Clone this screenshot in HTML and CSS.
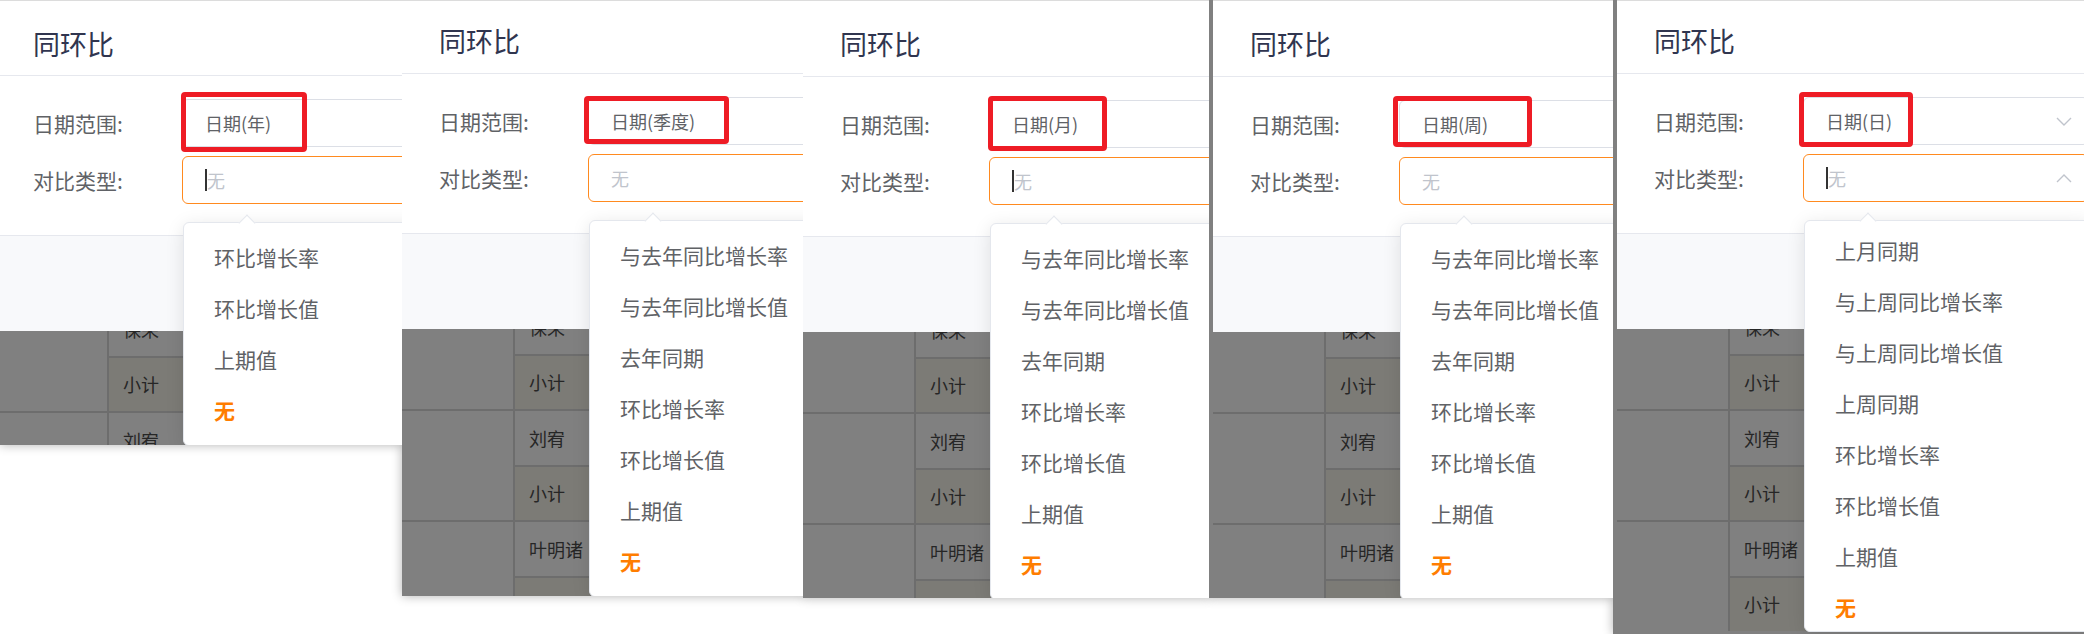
FILE: index.html
```html
<!DOCTYPE html>
<html lang="zh-CN">
<head>
    <meta charset="UTF-8">
    <title>同环比</title>
    <link rel="stylesheet" href="styles.css">
</head>
<body>
    <div class="shots">
        <!-- 年 -->
        <section class="shot shot-1">
            <div class="stage">
                <div class="dialog">
                    <div class="dialog-header"><span class="dialog-title">同环比</span></div>
                    <div class="dialog-body">
                        <div class="form-row">
                            <label class="form-label">日期范围:</label>
                            <div class="select">
                                <span>日期(年)</span>
                                <svg class="select-arrow" viewBox="0 0 16 9"><path d="M1 1 L8 8 L15 1"/></svg>
                                <span class="mark"></span>
                            </div>
                        </div>
                        <div class="form-row">
                            <label class="form-label">对比类型:</label>
                            <div class="select is-focus">
                                <span class="caret"></span><span class="placeholder">无</span>
                                <svg class="select-arrow" viewBox="0 0 16 9"><path d="M1 8 L8 1 L15 8"/></svg>
                                <div class="dropdown">
                                    <div class="dropdown-wrap">
                                        <ul class="dropdown-list">
                                            <li class="dropdown-item">环比增长率</li>
                                            <li class="dropdown-item">环比增长值</li>
                                            <li class="dropdown-item">上期值</li>
                                            <li class="dropdown-item selected">无</li>
                                        </ul>
                                    </div>
                                </div>
                            </div>
                        </div>
                    </div>
                    <div class="dialog-footer"></div>
                </div>
                <div class="backdrop">
                    <div class="cell cell-group"></div><div class="cell">保荣</div><div class="cell cell-sub">小计</div>
                    <div class="cell cell-group"></div><div class="cell">刘宥</div><div class="cell cell-sub">小计</div>
                </div>
            </div>
        </section>

        <!-- 季度 -->
        <section class="shot shot-2">
            <div class="stage">
                <div class="dialog">
                    <div class="dialog-header"><span class="dialog-title">同环比</span></div>
                    <div class="dialog-body">
                        <div class="form-row">
                            <label class="form-label">日期范围:</label>
                            <div class="select">
                                <span>日期(季度)</span>
                                <svg class="select-arrow" viewBox="0 0 16 9"><path d="M1 1 L8 8 L15 1"/></svg>
                                <span class="mark"></span>
                            </div>
                        </div>
                        <div class="form-row">
                            <label class="form-label">对比类型:</label>
                            <div class="select is-focus">
                                <span class="placeholder">无</span>
                                <svg class="select-arrow" viewBox="0 0 16 9"><path d="M1 8 L8 1 L15 8"/></svg>
                                <div class="dropdown">
                                    <div class="dropdown-wrap">
                                        <ul class="dropdown-list">
                                            <li class="dropdown-item">与去年同比增长率</li>
                                            <li class="dropdown-item">与去年同比增长值</li>
                                            <li class="dropdown-item">去年同期</li>
                                            <li class="dropdown-item">环比增长率</li>
                                            <li class="dropdown-item">环比增长值</li>
                                            <li class="dropdown-item">上期值</li>
                                            <li class="dropdown-item selected">无</li>
                                        </ul>
                                    </div>
                                </div>
                            </div>
                        </div>
                    </div>
                    <div class="dialog-footer"></div>
                </div>
                <div class="backdrop">
                    <div class="cell cell-group"></div><div class="cell">保荣</div><div class="cell cell-sub">小计</div>
                    <div class="cell cell-group"></div><div class="cell">刘宥</div><div class="cell cell-sub">小计</div>
                    <div class="cell cell-group"></div><div class="cell">叶明诸</div><div class="cell cell-sub">小计</div>
                </div>
            </div>
        </section>

        <!-- 月 -->
        <section class="shot shot-3">
            <div class="stage">
                <div class="dialog">
                    <div class="dialog-header"><span class="dialog-title">同环比</span></div>
                    <div class="dialog-body">
                        <div class="form-row">
                            <label class="form-label">日期范围:</label>
                            <div class="select">
                                <span>日期(月)</span>
                                <svg class="select-arrow" viewBox="0 0 16 9"><path d="M1 1 L8 8 L15 1"/></svg>
                                <span class="mark"></span>
                            </div>
                        </div>
                        <div class="form-row">
                            <label class="form-label">对比类型:</label>
                            <div class="select is-focus">
                                <span class="caret"></span><span class="placeholder">无</span>
                                <svg class="select-arrow" viewBox="0 0 16 9"><path d="M1 8 L8 1 L15 8"/></svg>
                                <div class="dropdown">
                                    <div class="dropdown-wrap">
                                        <ul class="dropdown-list">
                                            <li class="dropdown-item">与去年同比增长率</li>
                                            <li class="dropdown-item">与去年同比增长值</li>
                                            <li class="dropdown-item">去年同期</li>
                                            <li class="dropdown-item">环比增长率</li>
                                            <li class="dropdown-item">环比增长值</li>
                                            <li class="dropdown-item">上期值</li>
                                            <li class="dropdown-item selected">无</li>
                                        </ul>
                                    </div>
                                </div>
                            </div>
                        </div>
                    </div>
                    <div class="dialog-footer"></div>
                </div>
                <div class="backdrop">
                    <div class="cell cell-group"></div><div class="cell">保荣</div><div class="cell cell-sub">小计</div>
                    <div class="cell cell-group"></div><div class="cell">刘宥</div><div class="cell cell-sub">小计</div>
                    <div class="cell cell-group"></div><div class="cell">叶明诸</div><div class="cell cell-sub">小计</div>
                </div>
            </div>
        </section>

        <!-- 周 -->
        <section class="shot shot-4">
            <div class="stage">
                <div class="dialog">
                    <div class="dialog-header"><span class="dialog-title">同环比</span></div>
                    <div class="dialog-body">
                        <div class="form-row">
                            <label class="form-label">日期范围:</label>
                            <div class="select">
                                <span>日期(周)</span>
                                <svg class="select-arrow" viewBox="0 0 16 9"><path d="M1 1 L8 8 L15 1"/></svg>
                                <span class="mark"></span>
                            </div>
                        </div>
                        <div class="form-row">
                            <label class="form-label">对比类型:</label>
                            <div class="select is-focus">
                                <span class="placeholder">无</span>
                                <svg class="select-arrow" viewBox="0 0 16 9"><path d="M1 8 L8 1 L15 8"/></svg>
                                <div class="dropdown">
                                    <div class="dropdown-wrap">
                                        <ul class="dropdown-list">
                                            <li class="dropdown-item">与去年同比增长率</li>
                                            <li class="dropdown-item">与去年同比增长值</li>
                                            <li class="dropdown-item">去年同期</li>
                                            <li class="dropdown-item">环比增长率</li>
                                            <li class="dropdown-item">环比增长值</li>
                                            <li class="dropdown-item">上期值</li>
                                            <li class="dropdown-item selected">无</li>
                                        </ul>
                                    </div>
                                </div>
                            </div>
                        </div>
                    </div>
                    <div class="dialog-footer"></div>
                </div>
                <div class="backdrop">
                    <div class="cell cell-group"></div><div class="cell">保荣</div><div class="cell cell-sub">小计</div>
                    <div class="cell cell-group"></div><div class="cell">刘宥</div><div class="cell cell-sub">小计</div>
                    <div class="cell cell-group"></div><div class="cell">叶明诸</div><div class="cell cell-sub">小计</div>
                </div>
            </div>
        </section>

        <!-- 日 -->
        <section class="shot shot-5">
            <div class="stage">
                <div class="dialog">
                    <div class="dialog-header"><span class="dialog-title">同环比</span></div>
                    <div class="dialog-body">
                        <div class="form-row">
                            <label class="form-label">日期范围:</label>
                            <div class="select">
                                <span>日期(日)</span>
                                <svg class="select-arrow" viewBox="0 0 16 9"><path d="M1 1 L8 8 L15 1"/></svg>
                                <span class="mark"></span>
                            </div>
                        </div>
                        <div class="form-row">
                            <label class="form-label">对比类型:</label>
                            <div class="select is-focus">
                                <span class="caret"></span><span class="placeholder">无</span>
                                <svg class="select-arrow" viewBox="0 0 16 9"><path d="M1 8 L8 1 L15 8"/></svg>
                                <div class="dropdown">
                                    <div class="dropdown-wrap">
                                        <ul class="dropdown-list">
                                            <li class="dropdown-item">上月同期</li>
                                            <li class="dropdown-item">与上周同比增长率</li>
                                            <li class="dropdown-item">与上周同比增长值</li>
                                            <li class="dropdown-item">上周同期</li>
                                            <li class="dropdown-item">环比增长率</li>
                                            <li class="dropdown-item">环比增长值</li>
                                            <li class="dropdown-item">上期值</li>
                                            <li class="dropdown-item selected">无</li>
                                        </ul>
                                    </div>
                                </div>
                            </div>
                        </div>
                    </div>
                    <div class="dialog-footer"></div>
                </div>
                <div class="backdrop">
                    <div class="cell cell-group"></div><div class="cell">保荣</div><div class="cell cell-sub">小计</div>
                    <div class="cell cell-group"></div><div class="cell">刘宥</div><div class="cell cell-sub">小计</div>
                    <div class="cell cell-group"></div><div class="cell">叶明诸</div><div class="cell cell-sub">小计</div>
                </div>
            </div>
        </section>
    </div>
</body>
</html>
```

FILE: styles.css
```css
/* Reset and base styles */
* {
    margin: 0;
    padding: 0;
    box-sizing: border-box;
}

body {
    background-color: #fff;
    font-family: "Noto Sans CJK SC", "Microsoft YaHei", sans-serif;
}

.shots {
    display: flex;
    align-items: flex-start;
}

/* One cropped screenshot */
.shot {
    position: relative;
    flex: none;
    overflow: hidden;
    background-color: #808080;
    box-shadow: 0 0 10px rgba(0, 0, 0, 0.3);
}

.shot-1 { width: 402px; height: 445px; }
.shot-2 { width: 401px; height: 596px; }
.shot-3 { width: 406px; height: 598px; }
.shot-4 { width: 404px; height: 598px; }
.shot-5 { width: 471px; height: 634px; }

.stage {
    position: relative;
    padding-top: 300px;
}

/* each crop sits a little differently over the dialog */
.shot-1 .stage { margin-left: -4px; padding-top: 302px; }
.shot-3 .stage { padding-top: 303px; }
.shot-4 .stage { margin-left: 4px; padding-top: 303px; }
.shot-5 .stage { margin-left: 4px; }

/* Dialog */
.dialog {
    position: absolute;
    top: 0;
    left: 0;
    width: 700px;
    background-color: #fff;
    z-index: 2;
}

.dialog-header {
    height: 74px;
    display: flex;
    align-items: center;
    padding: 7px 0 0 37px;
    border-bottom: 1px solid #e6e8ee;
    box-shadow: inset 0 1px #dcdcdc;
}

.shot-1 .dialog-header { height: 76px; padding-top: 11px; }
.shot-3 .dialog-header,
.shot-4 .dialog-header { height: 77px; padding-top: 11px; }

.dialog-title {
    font-size: 27px;
    color: #30354f;
}

.dialog-body {
    height: 159px;
    padding: 23px 0 0 37px;
}

.dialog-footer {
    height: 96px;
    background-color: #f8f9fb;
    border-top: 1px solid #e6e8ee;
}

.form-row {
    display: flex;
    align-items: center;
}

.form-row + .form-row {
    margin-top: 9px;
}

.form-label {
    width: 149px;
    font-size: 21px;
    color: #606266;
}

/* Select */
.select {
    position: relative;
    width: 286px;
    height: 48px;
    display: flex;
    align-items: center;
    padding: 0 16px 0 22px;
    border: 1px solid #dcdfe6;
    border-radius: 6px;
    font-size: 18px;
    color: #606266;
}

.select.is-focus {
    border-color: #ff8a1f;
}

.select-arrow {
    margin-left: auto;
    width: 16px;
    height: 9px;
    fill: none;
    stroke: #c0c4cc;
    stroke-width: 1.4;
}

.placeholder {
    color: #c0c4cc;
}

.caret {
    width: 2px;
    height: 22px;
    background-color: #333;
}

/* Red marker drawn on the screenshot */
.mark {
    position: absolute;
    border: 5px solid #ee1c25;
    border-radius: 4px;
}

.shot-1 .mark { left: -2px; top: -8px; width: 126px; height: 60px; }
.shot-2 .mark { left: -5px; top: -2px; width: 145px; height: 48px; }
.shot-3 .mark { left: -2px; top: -5px; width: 119px; height: 55px; }
.shot-4 .mark { left: -7px; top: -5px; width: 139px; height: 51px; }
.shot-5 .mark { left: -5px; top: -6px; width: 114px; height: 55px; }

/* Dropdown */
.dropdown {
    position: absolute;
    top: 65px;
    left: 0;
    width: 286px;
    background-color: #fff;
    border: 1px solid #e4e7ed;
    border-radius: 6px;
    box-shadow: 0 3px 18px rgba(0, 0, 0, 0.1);
    z-index: 3;
}

.dropdown::before {
    content: "";
    position: absolute;
    top: -6px;
    left: 57px;
    width: 11px;
    height: 11px;
    background-color: #fff;
    border-top: 1px solid #e4e7ed;
    border-left: 1px solid #e4e7ed;
    transform: rotate(45deg);
}

.dropdown-wrap {
    position: relative;
    max-height: 410px;
    overflow: hidden;
}

.dropdown-list {
    list-style: none;
    padding: 9px 0;
}

/* the long list is scrolled so that the selected item is in view */
.shot-5 .dropdown-list {
    margin-top: -5px;
}

.dropdown-item {
    height: 51px;
    line-height: 51px;
    padding: 0 30px;
    font-size: 21px;
    color: #606266;
    white-space: nowrap;
}

.dropdown-item.selected {
    color: #ff7d00;
    font-weight: 700;
}

/* Table under the modal mask */
.backdrop {
    display: grid;
    grid-template-columns: 111px 600px;
    grid-auto-rows: 53.5px;
    gap: 2px;
    width: max-content;
    background-color: #6d6d6d;
}

.cell {
    display: flex;
    align-items: center;
    padding-left: 14px;
    background-color: #808080;
    font-size: 18px;
    color: #262626;
}

.cell-group {
    grid-row: span 2;
}

.cell-sub {
    background-color: #7c7b76;
}
```
